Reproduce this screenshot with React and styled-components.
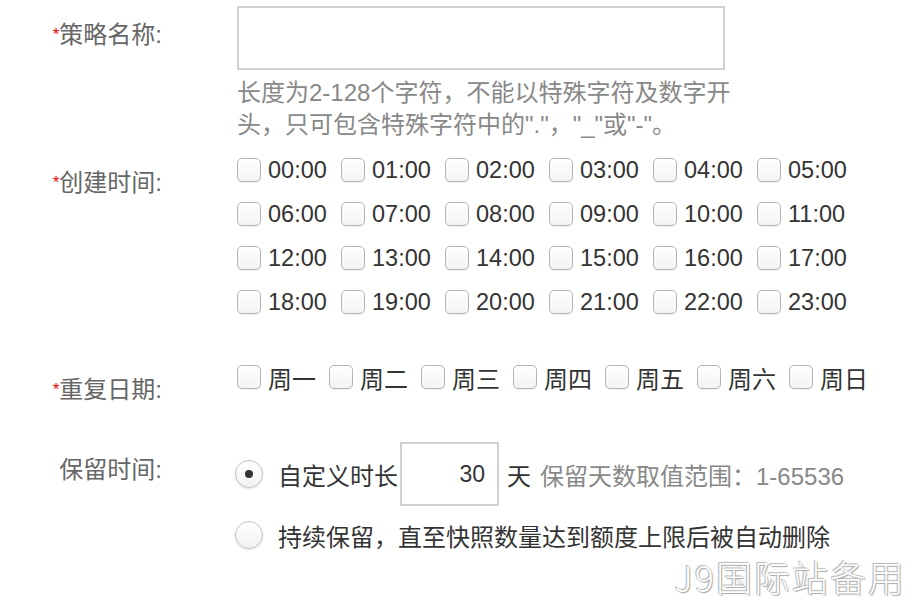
import React from 'react'
import styled, { createGlobalStyle } from 'styled-components'

const GlobalStyle = createGlobalStyle`
  html, body {
    margin: 0;
    padding: 0;
    background: #fff;
  }
  body {
    font-family: "Liberation Sans", "Noto Sans CJK SC", sans-serif;
    color: #333;
  }
`

const Page = styled.div`
  position: relative;
  width: 920px;
  height: 612px;
  padding-top: 6px;
  box-sizing: border-box;
  overflow: hidden;
`

const Row = styled.div`
  display: flex;
  align-items: flex-start;
  margin-top: ${props => props.$gap || 0}px;
`

const Label = styled.div`
  width: 162px;
  flex: none;
  text-align: right;
  font-size: 24px;
  line-height: 40px;
  color: #666;
  margin-top: ${props => props.$offset || 0}px;
`

const Star = styled.span`
  color: #f00;
  font-size: 17px;
  vertical-align: 3px;
`

const Field = styled.div`
  margin-left: 75px;
  display: flex;
  flex-direction: column;
`

const TextInput = styled.div`
  width: 488px;
  height: 64px;
  box-sizing: border-box;
  border: 2px solid #cfcfcf;
  background: #fff;
`

const Help = styled.div`
  margin-top: 7px;
  font-size: 24px;
  line-height: 32px;
  color: #888;
  white-space: nowrap;
`

const TimeGrid = styled.div`
  display: grid;
  grid-template-columns: repeat(6, 104px);
  grid-auto-rows: 44px;
`

const DayRow = styled.div`
  display: flex;
  height: 44px;
`

const Option = styled.label`
  display: flex;
  align-items: center;
  width: ${props => (props.$width ? `${props.$width}px` : 'auto')};
  font-size: ${props => props.$size || 24}px;
  color: #333;
  white-space: nowrap;
`

const Box = styled.span`
  width: 24px;
  height: 24px;
  flex: none;
  box-sizing: border-box;
  border: 1px solid #b4b4b4;
  border-radius: 5px;
  background: linear-gradient(#fff, #f3f3f3);
  box-shadow: 0 1px 1px rgba(0, 0, 0, 0.06);
  margin-right: 7px;
`

const RadioLine = styled.div`
  display: flex;
  align-items: center;
  height: ${props => props.$height}px;
  font-size: 24px;
  color: #333;
  white-space: nowrap;
`

const Radio = styled.span`
  width: 28px;
  height: 28px;
  flex: none;
  box-sizing: border-box;
  margin-left: -2px;
  margin-right: 15px;
  border-radius: 50%;
  border: 1px solid #c2c2c2;
  background: linear-gradient(#fff, #f2f2f2);
  box-shadow: 0 1px 2px rgba(0, 0, 0, 0.12);
  display: flex;
  align-items: center;
  justify-content: center;

  &::after {
    content: '';
    display: ${props => (props.$checked ? 'block' : 'none')};
    width: 8px;
    height: 8px;
    border-radius: 50%;
    background: #333;
  }
`

const DaysInput = styled.div`
  width: 99px;
  height: 64px;
  box-sizing: border-box;
  margin-left: 2px;
  padding-right: 12px;
  border: 2px solid #cfcfcf;
  display: flex;
  align-items: center;
  justify-content: flex-end;
  font-size: 23px;
  color: #333;
`

const Unit = styled.span`
  margin-left: 8px;
  color: #333;
`

const Hint = styled.span`
  margin-left: 9px;
  color: #888;
`

const Watermark = styled.div`
  position: absolute;
  right: 14px;
  bottom: 10px;
  font-family: "Noto Sans CJK SC", sans-serif;
  font-weight: 300;
  font-size: 36px;
  letter-spacing: 2px;
  color: #fff;
  text-shadow: 0 0 1px #999, 1px 1px 1px #aaa, -1px -1px 1px #bbb;
`

const hours = Array.from({ length: 24 }, (_, i) => `${String(i).padStart(2, '0')}:00`)
const days = ['周一', '周二', '周三', '周四', '周五', '周六', '周日']

export default function App() {
  return (
    <Page>
      <GlobalStyle />

      <Row>
        <Label $offset={9}><Star>*</Star>策略名称:</Label>
        <Field>
          <TextInput />
          <Help>
            长度为2-128个字符，不能以特殊字符及数字开<br />
            头，只可包含特殊字符中的"."，"_"或"-"。
          </Help>
        </Field>
      </Row>

      <Row $gap={7}>
        <Label $offset={15}><Star>*</Star>创建时间:</Label>
        <Field>
          <TimeGrid>
            {hours.map(h => (
              <Option key={h} $size={23.5}><Box />{h}</Option>
            ))}
          </TimeGrid>
        </Field>
      </Row>

      <Row $gap={31}>
        <Label $offset={15}><Star>*</Star>重复日期:</Label>
        <Field>
          <DayRow>
            {days.map(d => (
              <Option key={d} $width={92}><Box />{d}</Option>
            ))}
          </DayRow>
        </Field>
      </Row>

      <Row $gap={32}>
        <Label $offset={8}>保留时间:</Label>
        <Field>
          <RadioLine $height={64}>
            <Radio $checked />
            自定义时长
            <DaysInput>30</DaysInput>
            <Unit>天</Unit>
            <Hint>保留天数取值范围：1-65536</Hint>
          </RadioLine>
          <RadioLine $height={58}>
            <Radio />
            持续保留，直至快照数量达到额度上限后被自动删除
          </RadioLine>
        </Field>
      </Row>

      <Watermark>J9国际站备用</Watermark>
    </Page>
  )
}
